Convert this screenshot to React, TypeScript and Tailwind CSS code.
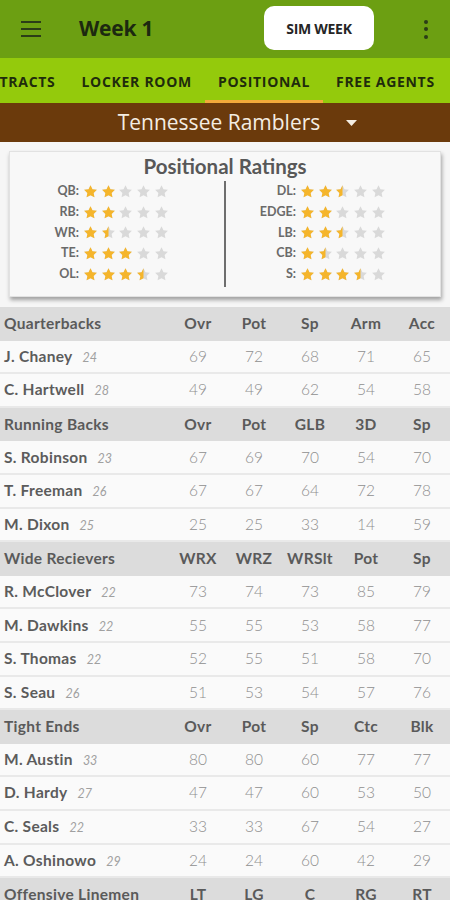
import { Fragment } from 'react';

type Rating = { pos: string; stars: number };

const leftRatings: Rating[] = [
  { pos: 'QB', stars: 2 },
  { pos: 'RB', stars: 2 },
  { pos: 'WR', stars: 1.5 },
  { pos: 'TE', stars: 3 },
  { pos: 'OL', stars: 3.5 },
];

const rightRatings: Rating[] = [
  { pos: 'DL', stars: 2.5 },
  { pos: 'EDGE', stars: 2 },
  { pos: 'LB', stars: 2.5 },
  { pos: 'CB', stars: 1.5 },
  { pos: 'S', stars: 3.5 },
];

type Player = { name: string; age: number; stats: number[] };
type Group = { title: string; cols: string[]; players: Player[] };

const groups: Group[] = [
  {
    title: 'Quarterbacks',
    cols: ['Ovr', 'Pot', 'Sp', 'Arm', 'Acc'],
    players: [
      { name: 'J. Chaney', age: 24, stats: [69, 72, 68, 71, 65] },
      { name: 'C. Hartwell', age: 28, stats: [49, 49, 62, 54, 58] },
    ],
  },
  {
    title: 'Running Backs',
    cols: ['Ovr', 'Pot', 'GLB', '3D', 'Sp'],
    players: [
      { name: 'S. Robinson', age: 23, stats: [67, 69, 70, 54, 70] },
      { name: 'T. Freeman', age: 26, stats: [67, 67, 64, 72, 78] },
      { name: 'M. Dixon', age: 25, stats: [25, 25, 33, 14, 59] },
    ],
  },
  {
    title: 'Wide Recievers',
    cols: ['WRX', 'WRZ', 'WRSlt', 'Pot', 'Sp'],
    players: [
      { name: 'R. McClover', age: 22, stats: [73, 74, 73, 85, 79] },
      { name: 'M. Dawkins', age: 22, stats: [55, 55, 53, 58, 77] },
      { name: 'S. Thomas', age: 22, stats: [52, 55, 51, 58, 70] },
      { name: 'S. Seau', age: 26, stats: [51, 53, 54, 57, 76] },
    ],
  },
  {
    title: 'Tight Ends',
    cols: ['Ovr', 'Pot', 'Sp', 'Ctc', 'Blk'],
    players: [
      { name: 'M. Austin', age: 33, stats: [80, 80, 60, 77, 77] },
      { name: 'D. Hardy', age: 27, stats: [47, 47, 60, 53, 50] },
      { name: 'C. Seals', age: 22, stats: [33, 33, 67, 54, 27] },
      { name: 'A. Oshinowo', age: 29, stats: [24, 24, 60, 42, 29] },
    ],
  },
  {
    title: 'Offensive Linemen',
    cols: ['LT', 'LG', 'C', 'RG', 'RT'],
    players: [],
  },
];

const STAR = 'M12 1.8l3.1 6.6 7.1.9-5.2 4.9 1.3 7.1L12 17.8l-6.3 3.5 1.3-7.1L1.8 9.3l7.1-.9L12 1.8z';

function Star({ fill, id }: { fill: number; id: string }) {
  return (
    <svg width="15" height="15" viewBox="0 0 24 24">
      <defs>
        <clipPath id={id}>
          <rect x="0" y="0" width={24 * fill} height="24" />
        </clipPath>
      </defs>
      <path d={STAR} fill="#d9d9d9" />
      {fill > 0 && <path d={STAR} fill="#f5b52b" clipPath={`url(#${id})`} />}
    </svg>
  );
}

function RatingRow({ r }: { r: Rating }) {
  return (
    <div className="flex items-center h-[20.8px]">
      <span className="w-[69px] text-right text-[12.5px] font-bold text-[#6a6a6a]">{r.pos}:</span>
      <div className="flex gap-[2.7px] ml-[4px]">
        {[0, 1, 2, 3, 4].map((i) => (
          <Star key={i} id={`s-${r.pos}-${i}`} fill={Math.max(0, Math.min(1, r.stars - i))} />
        ))}
      </div>
    </div>
  );
}

function HeaderRow({ group }: { group: Group }) {
  return (
    <div className="flex items-center h-[33.6px] bg-[#dcdcdc] text-[#5a5a5a] font-bold text-[15.5px] tracking-[0.3px] whitespace-nowrap">
      <div className="w-[170px] pl-[4px]">{group.title}</div>
      {group.cols.map((c, i) => (
        <div key={i} className="w-[56px] text-center">{c}</div>
      ))}
    </div>
  );
}

function PlayerRow({ p }: { p: Player }) {
  return (
    <div className="flex items-center h-[33.6px] bg-[#fafafa] border-b-2 border-[#e9e9e9]">
      <div className="w-[170px] pl-[4px] flex items-baseline">
        <span className="text-[15.5px] font-bold text-[#5c5c5c] tracking-[0.3px]">{p.name}</span>
        <span className="ml-[10px] text-[12.5px] italic text-[#a0a0a0]">{p.age}</span>
      </div>
      {p.stats.map((s, i) => (
        <div key={i} className="w-[56px] text-center text-[15.5px] font-light text-[#8f8f8f]">{s}</div>
      ))}
    </div>
  );
}

export default function App() {
  return (
    <div className="w-[450px] h-[900px] overflow-hidden bg-[#f6f6f6] font-['Lato',sans-serif]">
      {/* toolbar */}
      <div className="h-[58px] bg-[#6c9f12] flex items-center font-['Open_Sans',sans-serif]">
        <div className="w-[21px]" />
        <div className="flex flex-col gap-[4.5px] w-[20px]">
          <div className="h-[2.5px] bg-[#2b3d17]" />
          <div className="h-[2.5px] bg-[#2b3d17]" />
          <div className="h-[2.5px] bg-[#2b3d17]" />
        </div>
        <div className="ml-[38px] text-[21px] font-bold text-[#1c2910] tracking-[-0.2px]">Week 1</div>
        <div className="flex-1" />
        <div className="w-[110px] h-[44px] mr-[28px] bg-white rounded-[10px] flex items-center justify-center text-[14px] font-bold text-[#262626] tracking-[-0.3px] mt-[-2px]">
          SIM WEEK
        </div>
        <div className="w-[48px] flex flex-col items-center gap-[3.5px]">
          <div className="w-[4px] h-[4px] rounded-full bg-[#2b3d17]" />
          <div className="w-[4px] h-[4px] rounded-full bg-[#2b3d17]" />
          <div className="w-[4px] h-[4px] rounded-full bg-[#2b3d17]" />
        </div>
      </div>

      {/* tabs */}
      <div className="h-[45px] bg-[#94ca0c] overflow-hidden font-['Open_Sans',sans-serif]">
        <div className="flex h-full ml-[-47px] whitespace-nowrap">
          {['CONTRACTS', 'LOCKER ROOM', 'POSITIONAL', 'FREE AGENTS'].map((t) => (
            <div
              key={t}
              className={`px-[13px] h-full flex items-center text-[14px] font-bold tracking-[0.7px] text-[#1f2c0c] border-b-[3px] ${
                t === 'POSITIONAL' ? 'border-[#f2a93a]' : 'border-transparent'
              }`}
            >
              <span className="pt-[5px]">{t}</span>
            </div>
          ))}
        </div>
      </div>

      {/* team selector */}
      <div className="h-[39px] bg-[#6b3a0c] flex items-center justify-center font-['Open_Sans',sans-serif]">
        <div className="flex items-center mr-[-25px]">
          <span className="text-[21px] text-[#f4ede3]">Tennessee Ramblers</span>
          <svg className="ml-[26px]" width="11" height="6" viewBox="0 0 11 6">
            <path d="M0 0h11L5.5 6z" fill="#f4ede3" />
          </svg>
        </div>
      </div>

      {/* ratings card */}
      <div className="px-[9px] pt-[9px] pb-[10px]">
        <div className="h-[146px] bg-[#f8f8f8] border border-[#e2e2e2] shadow-[1px_3px_4px_rgba(0,0,0,0.35)]">
          <div className="text-center text-[20.5px] font-bold text-[#585858] pt-[2px] leading-[24px]">
            Positional Ratings
          </div>
          <div className="flex mt-[2px]">
            <div className="w-[214px] pt-[1px]">
              {leftRatings.map((r) => (
                <RatingRow key={r.pos} r={r} />
              ))}
            </div>
            <div className="w-[2px] h-[106px] bg-[#6e6e6e] mt-[1px]" />
            <div className="pt-[1px] ml-[1px]">
              {rightRatings.map((r) => (
                <RatingRow key={r.pos} r={r} />
              ))}
            </div>
          </div>
        </div>
      </div>

      {/* roster table */}
      <div>
        {groups.map((g) => (
          <Fragment key={g.title}>
            <HeaderRow group={g} />
            {g.players.map((p) => (
              <PlayerRow key={p.name} p={p} />
            ))}
          </Fragment>
        ))}
      </div>
    </div>
  );
}
